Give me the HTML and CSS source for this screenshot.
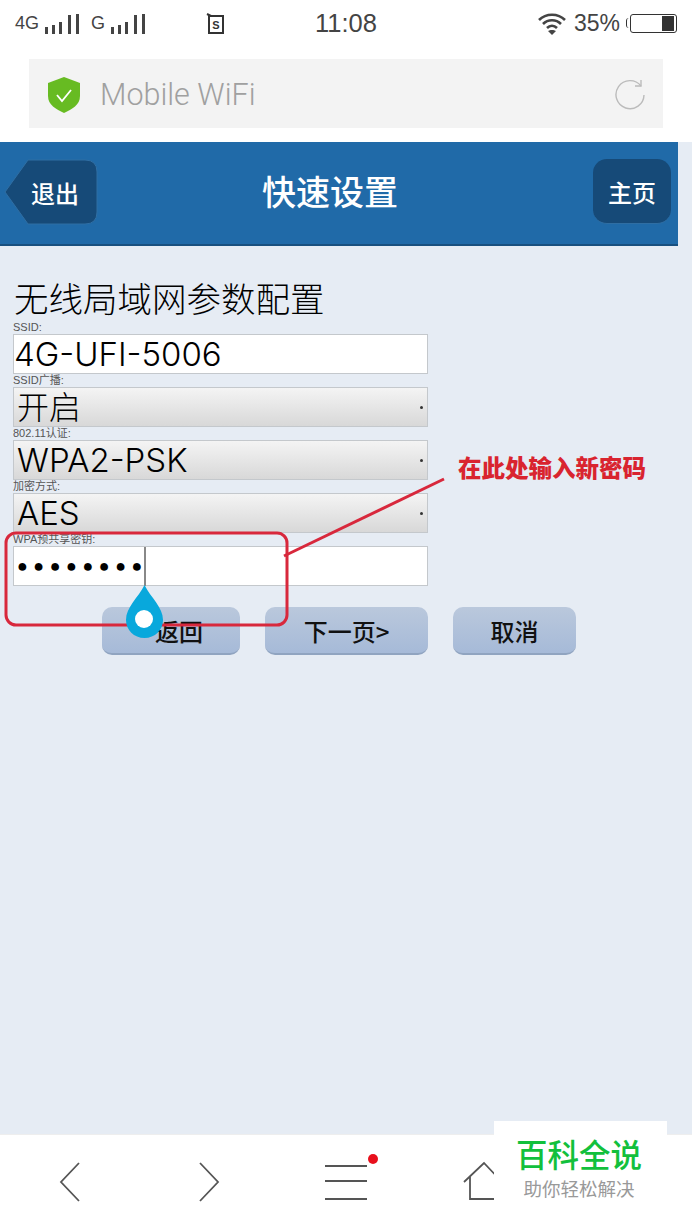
FILE: index.html
```html
<!DOCTYPE html>
<html lang="zh-CN">
<head>
    <meta charset="UTF-8">
    <meta name="viewport" content="width=device-width, initial-scale=1.0">
    <title>快速设置</title>
    <link rel="stylesheet" href="styles.css">
</head>
<body>
    <div class="status">
        <div class="signal">
            <span>4G</span>
            <svg width="38" height="22" viewBox="0 0 37 22"><path d="M3 21V14M10 21V12M17 21V9M26 21V2M34 21V1" stroke="#444" stroke-width="3"/></svg>
            <span class="g">G</span>
            <svg width="38" height="22" viewBox="0 0 37 22"><path d="M3 21V14M10 21V12M17 21V9M26 21V2M34 21V1" stroke="#444" stroke-width="3"/></svg>
        </div>
        <svg class="sim" width="20" height="22" viewBox="0 0 20 22"><path d="M3 3H17V20H3Z M1 1L5 3" fill="none" stroke="#333" stroke-width="2"/><text x="10" y="16" text-anchor="middle" class="sim-s">S</text></svg>
        <div class="time">11:08</div>
        <div class="right">
            <svg width="30" height="24" viewBox="0 0 30 24"><path d="M2 8C9 1 21 1 28 8M6 12C11 7 19 7 24 12M10 16C13 13 17 13 20 16" fill="none" stroke="#444" stroke-width="2.6"/><path d="M15 23L11 19C13 17.5 17 17.5 19 19Z" fill="#444"/></svg>
            <span>35%</span>
            <div class="battery"><div class="battery-fill"></div></div>
        </div>
    </div>

    <div class="address">
        <svg width="32" height="36" viewBox="0 0 32 36"><path d="M16 0L32 6V19C32 28 24 32 16 36C8 32 0 28 0 19V6Z" fill="#67bb22"/><path d="M9 18L14 24L23 13" fill="none" stroke="#fff" stroke-width="1.8"/></svg>
        <span class="address-text">Mobile WiFi</span>
        <svg class="reload" width="32" height="32" viewBox="0 0 32 32"><path d="M27 7A14 14 0 1 0 30 16" fill="none" stroke="#bbb" stroke-width="1.4"/><path d="M27 1V7H21" fill="none" stroke="#bbb" stroke-width="1.4"/></svg>
    </div>

    <div class="page">
        <div class="header">
            <svg class="back" width="94" height="66" viewBox="0 0 94 66"><path d="M24 1H81Q93 1 93 13V53Q93 65 81 65H24L1 33Z" fill="#164a78" stroke="#2f6ea3" stroke-width="1"/></svg>
            <span class="back-text">退出</span>
            <h1>快速设置</h1>
            <div class="home">主页</div>
        </div>

        <div class="content">
            <h2>无线局域网参数配置</h2>
            <label>SSID:</label>
            <div class="field">4G-UFI-5006</div>
            <label>SSID广播:</label>
            <div class="field select"><span class="cjk">开启</span><span class="arrow"></span></div>
            <label>802.11认证:</label>
            <div class="field select">WPA2-PSK<span class="arrow"></span></div>
            <label>加密方式:</label>
            <div class="field select">AES<span class="arrow"></span></div>
            <label>WPA预共享密钥:</label>
            <div class="field password"><span class="dots">●●●●●●●●</span><span class="caret"></span></div>
            <div class="buttons">
                <button class="btn-back">返回</button>
                <button class="btn-next">下一页&gt;</button>
                <button class="btn-cancel">取消</button>
            </div>
        </div>
    </div>

    <div class="toolbar">
        <svg class="tool-prev" width="24" height="42" viewBox="0 0 24 42"><path d="M21 2L3 21L21 40" fill="none" stroke="#555" stroke-width="1.8"/></svg>
        <svg class="tool-next" width="24" height="42" viewBox="0 0 24 42"><path d="M3 2L21 21L3 40" fill="none" stroke="#555" stroke-width="1.8"/></svg>
        <svg class="tool-menu" width="56" height="50" viewBox="0 0 56 50"><path d="M0 13H42M0 28H42M0 46H42" stroke="#555" stroke-width="2"/><circle cx="48" cy="6" r="5" fill="#e8101c"/></svg>
        <svg class="tool-home" width="40" height="42" viewBox="0 0 40 42"><path d="M1 21L21 2L39 21M7 15V38H39" fill="none" stroke="#555" stroke-width="1.8"/></svg>
    </div>

    <!-- annotations drawn over the screenshot -->
    <svg class="marks" width="692" height="1230" viewBox="0 0 692 1230">
        <rect x="6" y="533" width="281" height="92" rx="10" fill="none" stroke="#d8283c" stroke-width="3"/>
        <path d="M444 479L284 556" stroke="#d8283c" stroke-width="3"/>
        <path d="M144.500 585C138 598 126 607 126 620C126 630 134 638 144.500 638C155 638 163 630 163 620C163 607 151 598 144.500 585Z" fill="#08a8dc"/>
        <circle cx="144" cy="619" r="9" fill="#fff"/>
    </svg>
    <div class="note">在此处输入新密码</div>
    <div class="brand">
        <div class="brand-name">百科全说</div>
        <div class="brand-sub">助你轻松解决</div>
    </div>
</body>
</html>
```

FILE: styles.css
```css
* {
    box-sizing: border-box;
}
html, body {
    margin: 0;
    height: 100%;
}
body {
    width: 692px;
    height: 1230px;
    overflow: hidden;
    position: relative;
    display: flex;
    flex-direction: column;
    background: #fff;
    font-family: "Liberation Sans", "Noto Sans CJK SC", sans-serif;
}
.status {
    height: 59px;
    padding: 0 15px 12px 15px;
    display: flex;
    align-items: center;
    color: #444;
    font-size: 23px;
}
.signal {
    width: 191px;
    display: flex;
    align-items: center;
    font-size: 18px;
    gap: 4px;
}
.signal .g {
    margin-left: 6px;
}
.sim-s {
    font-size: 11px;
    font-weight: bold;
    fill: #333;
}
.time {
    margin-left: 89px;
    font-size: 25.5px;
}
.right {
    display: flex;
    align-items: center;
    gap: 7px;
    margin-left: auto;
}
.battery {
    width: 47px;
    height: 19px;
    border: 1.5px solid #333;
    border-radius: 3px;
    margin-left: 3px;
    display: flex;
    justify-content: flex-end;
    padding: 1px 2px;
    position: relative;
}
.battery::before {
    content: "";
    position: absolute;
    left: -5px;
    top: 3px;
    width: 3px;
    height: 10px;
    border-left: 1.5px solid #333;
    border-radius: 3px 0 0 3px;
}
.battery-fill {
    width: 12px;
    background: #333;
}
.address {
    margin: 0 29px;
    height: 69px;
    background: #f3f3f3;
    display: flex;
    align-items: center;
    padding: 2px 17px 0 19px;
}
.address-text {
    margin-left: 20px;
    font-size: 30.500px;
    font-weight: 300;
    color: #a0a0a0;
    flex: 1;
    font-family: Roboto, sans-serif;
}
.page {
    margin-top: 14px;
    flex: 1;
    background: #e6ecf4;
}
.header {
    width: 678px;
    height: 104px;
    background: #206aa8;
    border-bottom: 2px solid #18507f;
    display: flex;
    align-items: center;
    justify-content: center;
    position: relative;
    color: #fff;
}
.header h1 {
    margin: 0 18px 6px 0;
    font-size: 34px;
    font-weight: 500;
}
.back {
    position: absolute;
    left: 4px;
    top: 17px;
}
.back-text {
    position: absolute;
    left: 31px;
    top: 33px;
    font-size: 24px;
    font-weight: 500;
}
.home {
    position: absolute;
    left: 593px;
    top: 17px;
    width: 78px;
    height: 65px;
    background: #164a78;
    border-radius: 14px;
    border-bottom: 1px solid #2f6ea3;
    display: flex;
    align-items: center;
    justify-content: center;
    font-size: 24px;
    font-weight: 500;
}
.content {
    padding: 33px 0 0 13px;
    width: 428px;
    box-sizing: content-box;
}
h2 {
    margin: 0;
    font-size: 34.5px;
    font-weight: 300;
    line-height: 42px;
    padding-left: 1px;
    color: #000;
}
label {
    display: block;
    font-size: 11px;
    line-height: 13px;
    height: 13px;
    color: #555;
}
.field {
    width: 415px;
    height: 40px;
    background: #fff;
    border: 1px solid #c4c8cc;
    font-family: Inter, "Noto Sans CJK SC", sans-serif;
    font-weight: 300;
    font-size: 33px;
    line-height: 38px;
    padding-left: 0;
    color: #000;
    white-space: nowrap;
    position: relative;
}
.select {
    background: linear-gradient(#f4f4f4, #d8d8d8);
    padding-left: 3px;
}
.cjk {
    font-size: 32px;
}
.arrow {
    position: absolute;
    right: 4px;
    top: 18px;
    width: 3px;
    height: 3px;
    border-radius: 50%;
    background: #333;
}
.password {
    display: flex;
    align-items: center;
    padding-left: 3px;
}
.dots {
    font-size: 18px;
    letter-spacing: 5.500px;
    color: #000;
    font-family: "DejaVu Sans", sans-serif;
}
.caret {
    position: absolute;
    left: 130px;
    top: 0;
    width: 2px;
    height: 39px;
    background: #888;
}
.buttons {
    display: flex;
    gap: 25px;
    padding-left: 89px;
    margin-top: 21px;
}
button {
    flex: none;
    height: 48px;
    border: none;
    border-bottom: 2px solid #90a4c0;
    border-radius: 10px;
    background: linear-gradient(#bac8dc, #a6bad8);
    font-family: "Noto Sans CJK SC", sans-serif;
    font-size: 24px;
    font-weight: 500;
    color: #111;
    padding: 0;
}
.btn-back {
    width: 138px;
    padding-left: 16px;
}
.btn-next {
    width: 163px;
}
.btn-cancel {
    width: 123px;
}
.toolbar {
    height: 96px;
    border-top: 1px solid #eee;
    padding: 26px 0 0 58px;
    display: flex;
    align-items: flex-start;
}
.tool-next {
    margin-left: 115px;
}
.tool-menu {
    margin-left: 104px;
    margin-top: -8px;
}
.tool-home {
    margin-left: 82px;
}
.marks {
    position: absolute;
    left: 0;
    top: 0;
    pointer-events: none;
}
.note {
    position: absolute;
    left: 458px;
    top: 451px;
    font-family: "Noto Sans CJK SC", sans-serif;
    font-size: 23.500px;
    font-weight: 900;
    line-height: 32px;
    color: #d9242f;
}
.brand {
    position: absolute;
    left: 494px;
    top: 1121px;
    width: 173px;
    height: 109px;
    background: #fff;
    padding-right: 3px;
    text-align: center;
}
.brand-name {
    margin-top: 14px;
    font-size: 31.500px;
    line-height: 42px;
    font-weight: 500;
    color: #12c03c;
}
.brand-sub {
    font-size: 18.500px;
    line-height: 26px;
    color: #999;
}
```
